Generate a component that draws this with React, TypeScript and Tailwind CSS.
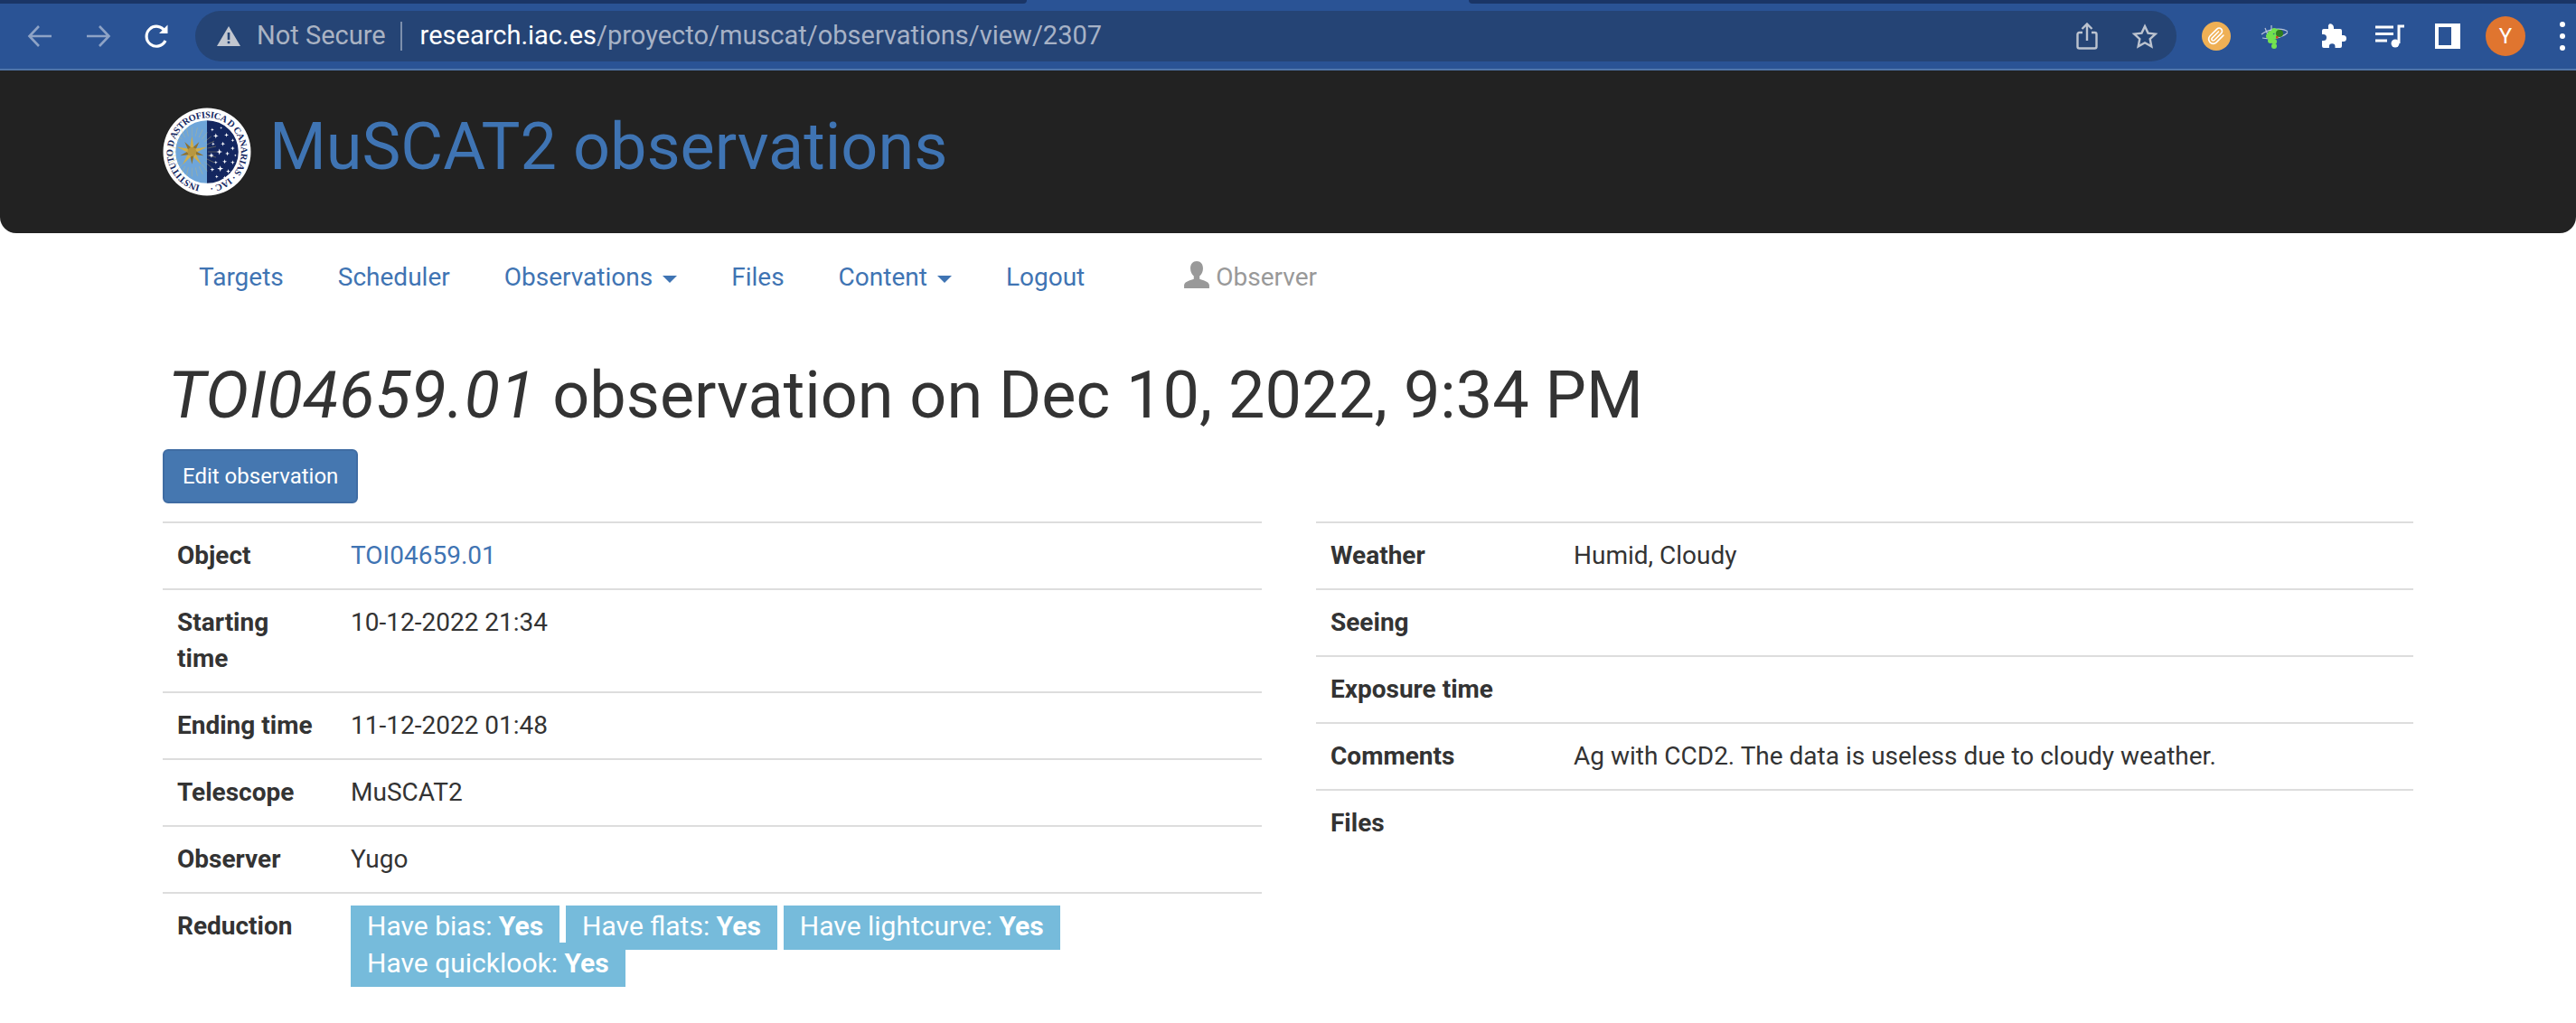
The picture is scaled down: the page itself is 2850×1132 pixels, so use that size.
import React from "react";

const font = { fontFamily: "Roboto, 'Liberation Sans', sans-serif" };

function Logo() {
  const points = Array.from({ length: 10 }, (_, i) => i * 36);
  const rays = Array.from({ length: 28 }, (_, i) => i * 12.857);
  const stars: [number, number, number][] = [
    [56, 25, 2], [66, 23, 1.5], [60, 32, 3], [72, 31, 2.5], [79, 37, 2], [57, 41, 2], [68, 41, 2.5], [79, 46, 2.5],
    [64, 50, 3.5], [55, 54, 3], [73, 52, 2.5], [82, 54, 1.5], [60, 62, 2], [70, 61, 2.5], [79, 62, 2.5],
    [56, 70, 2.5], [65, 69, 3.5], [74, 72, 2.5], [61, 78, 2], [70, 79, 2],
  ];
  return (
    <svg viewBox="0 0 100 100" className="w-[98px] h-[98px] shrink-0">
      <circle cx="50" cy="50" r="49.5" fill="#ffffff" />
      <path d="M50 14.500A35.500 35.500 0 0 0 50 85.500Z" fill="#6ea5d9" />
      <path d="M50 14.500A35.500 35.500 0 0 1 50 85.500Z" fill="#13265f" />
      {rays.map((r) => (
        <path key={r} d="M33 32 V22" stroke="#cdbb6a" strokeWidth="0.5" transform={`rotate(${r} 33 50)`} opacity="0.7" />
      ))}
      {points.map((r, i) => (
        <path key={r} d={`M30 50 L33 ${i % 2 ? 36 : 32} L36 50 Z`} fill={i % 2 ? "#8f7330" : "#cfae4c"} transform={`rotate(${r} 33 50)`} />
      ))}
      <circle cx="33" cy="50" r="5" fill="#b8973f" />
      {stars.map(([x, y, s], i) => (
        <path
          key={i}
          d={`M${x} ${y - s}L${x + s * 0.25} ${y - s * 0.25}L${x + s} ${y}L${x + s * 0.25} ${y + s * 0.25}L${x} ${y + s}L${x - s * 0.25} ${y + s * 0.25}L${x - s} ${y}L${x - s * 0.25} ${y - s * 0.25}Z`}
          fill="#ffffff"
        />
      ))}
      <defs>
        <path id="ring2" d="M50 88.500A38.500 38.500 0 1 1 50.010 88.500" />
      </defs>
      <text fontSize="10.500" fontWeight="700" fill="#13265f" fontFamily="'Liberation Serif', serif">
        <textPath href="#ring2" startOffset="8" textLength="230" lengthAdjust="spacing">INSTITUTO D ASTROFISICA D CANARIAS · IAC ·</textPath>
      </text>
    </svg>
  );
}

function Caret() {
  return <span className="inline-block ml-[11px] align-middle w-0 h-0 border-t-[8px] border-t-[#3f74b3] border-x-[8px] border-x-transparent" />;
}

function Chrome() {
  return (
    <div className="relative h-[78px] bg-[#2a5395] border-b-2 border-b-[#4f74a8] flex items-center pt-[4px]">
      <div className="absolute top-0 left-0 w-[1136px] h-[4px] bg-[#1a3566] rounded-br-[6px]" />
      <div className="absolute top-0 left-[1625px] right-0 h-[4px] bg-[#1a3566] rounded-bl-[6px]" />
      <div className="flex items-center shrink-0 w-[216px] pl-[30px]">
        <svg width="28" height="26" viewBox="0 0 28 26" fill="none" stroke="#8ea3c6" strokeWidth="2.6">
          <path d="M27 13H3M13 2 2.500 13 13 24" />
        </svg>
        <svg className="ml-[37px]" width="28" height="26" viewBox="0 0 28 26" fill="none" stroke="#8ea3c6" strokeWidth="2.6">
          <path d="M1 13H25M15 2 25.500 13 15 24" />
        </svg>
        <svg className="ml-[37px]" width="28" height="28" viewBox="0 0 28 28" fill="none" stroke="#ffffff" strokeWidth="3.2">
          <path d="M23 19a11 11 0 1 1-.5-10.500" />
          <path d="M25.500 1.500V11H16Z" fill="#ffffff" stroke="none" />
        </svg>
      </div>
      <div className="w-[2192px] h-[56px] rounded-full bg-[#254475] flex items-center pl-[24px] pr-[20px] text-[29px]" style={font}>
        <svg width="26" height="22" viewBox="0 0 26 22">
          <path d="M13 0 26 22H0Z" fill="#c2c7d0" />
          <rect x="11.700" y="7" width="2.600" height="8" fill="#254475" />
          <rect x="11.700" y="16.600" width="2.600" height="2.600" fill="#254475" />
        </svg>
        <span className="ml-[18px] text-[#aab3c3]">Not Secure</span>
        <span className="ml-[16px] w-[2px] h-[32px] bg-[#7d8fac]" />
        <span className="ml-[20px] text-white">research.iac.es</span>
        <span className="text-[#a7b2c6]">/proyecto/muscat/observations/view/2307</span>
        <span className="flex-1" />
        <svg width="24" height="30" viewBox="0 0 24 30" fill="none" stroke="#bcc3cf" strokeWidth="2.400" className="-ml-[2px]">
          <path d="M7 11H3.500A2 2 0 0 0 1.500 13V26.500A2 2 0 0 0 3.500 28.500H20.500A2 2 0 0 0 22.500 26.500V13A2 2 0 0 0 20.500 11H17" />
          <path d="M12 20V2M6.500 7 12 1.500 17.500 7" />
        </svg>
        <svg className="ml-[37px]" width="30" height="28" viewBox="0 0 24 23" fill="none" stroke="#bcc3cf" strokeWidth="2">
          <path d="M12 2.500 14.900 8.700 21.600 9.500 16.700 14.100 18 20.800 12 17.500 6 20.800 7.300 14.100 2.400 9.500 9.100 8.700Z" />
        </svg>
      </div>
      <div className="flex items-center pl-[28px]">
        <div className="w-[32px] h-[32px] rounded-full bg-[#efb055] flex items-center justify-center">
          <svg width="20" height="20" viewBox="0 0 24 24" fill="none" stroke="#ffffff" strokeWidth="2" strokeLinecap="round">
            <path d="M21.400 11 12.200 20.200a6 6 0 0 1-8.500-8.500l9.200-9.200a4 4 0 0 1 5.700 5.700l-9.200 9.200a2 2 0 0 1-2.900-2.900l8.500-8.500" />
          </svg>
        </div>
        <svg className="ml-[33px]" width="32" height="32" viewBox="0 0 32 32">
          <path d="M1 14C8 8 24 6 30 11M5 7 9 17M12 4 12 14M2 18C10 20 24 18 30 12" fill="none" stroke="#b9c5da" strokeWidth="1.200" />
          {[[11, 13], [15, 10], [19, 11], [9, 16], [13, 17], [17, 16], [11, 21], [15, 22], [15, 27]].map(([x, y], i) => (
            <circle key={i} cx={x} cy={y} r="3" fill="#73e24f" />
          ))}
          <circle cx="21" cy="13" r="4" fill="#2f7d1f" />
          <rect x="17" y="16" width="2.500" height="2.500" fill="#d9382b" />
        </svg>
        <svg className="ml-[33px]" width="30" height="30" viewBox="0 0 30 30" fill="#ffffff">
          <path d="M11 1.500a4 4 0 0 1 5 4V7h7a2 2 0 0 1 2 2v5h1.500a3.500 3.500 0 0 1 0 7H25v5a2 2 0 0 1-2 2h-5.500v-1.500a3.300 3.300 0 0 0-6.600 0V28H5a2 2 0 0 1-2-2v-6h1.500a3.500 3.500 0 0 0 0-7H3V9a2 2 0 0 1 2-2h5V5.500a4 4 0 0 1 1-4Z" />
        </svg>
        <svg className="ml-[31px]" width="34" height="26" viewBox="0 0 34 26" fill="none" stroke="#ffffff" strokeWidth="3">
          <path d="M1 3H21M1 10.500H21M1 18H14" />
          <path d="M27 21V2H33" />
          <circle cx="23" cy="21" r="4.500" fill="#ffffff" stroke="none" />
        </svg>
        <div className="ml-[33px] w-[28px] h-[28px] bg-white flex pl-[4px] py-[4px] pr-[10px]">
          <div className="flex-1 bg-[#2a5395]" />
        </div>
        <div className="ml-[28px] w-[44px] h-[44px] rounded-full bg-[#e0752f] text-white flex items-center justify-center text-[24px]" style={font}>Y</div>
        <div className="ml-[38px] flex flex-col gap-[7px]">
          <span className="w-[6px] h-[6px] rounded-full bg-white" />
          <span className="w-[6px] h-[6px] rounded-full bg-white" />
          <span className="w-[6px] h-[6px] rounded-full bg-white" />
        </div>
      </div>
    </div>
  );
}

function Row({ label, children, h }: { label: React.ReactNode; children?: React.ReactNode; h: string }) {
  return (
    <div className="flex border-t-2 border-t-[#dddddd] py-[16px] leading-[40px]">
      <div className={`${h} shrink-0 pl-[16px] font-bold`}>{label}</div>
      <div className="flex-1">{children}</div>
    </div>
  );
}

function Label({ name }: { name: string }) {
  return (
    <span className="bg-[#76bbdb] text-white px-[18px] pt-[5px] pb-[9px] text-[30px]">
      {name}: <b>Yes</b>
    </span>
  );
}

const navItem = "px-[30px] text-[#3f74b3]";

export default function App() {
  return (
    <div className="w-[2850px] h-[1132px] overflow-hidden bg-white text-[28px] text-[#333333]" style={font}>
      <Chrome />
      <header className="h-[180px] bg-[#222222] rounded-b-[18px] flex items-center pl-[180px]">
        <Logo />
        <h1 className="ml-[20px] text-[72px] leading-[80px] font-normal text-[#3f74b3] -mt-[10px]">MuSCAT2 observations</h1>
      </header>
      <nav className="flex items-center h-[98px] pl-[190px]">
        <a className={navItem}>Targets</a>
        <a className={navItem}>Scheduler</a>
        <a className={navItem}>Observations<Caret /></a>
        <a className={navItem}>Files</a>
        <a className={navItem}>Content<Caret /></a>
        <a className={navItem}>Logout</a>
        <span className="ml-[79px] flex items-center text-[#999999]">
          <svg width="30" height="30" viewBox="0 0 28 28" fill="#999999" className="-mt-[6px]">
            <path d="M14 0c4 0 6.500 3 6.500 7.500 0 3.500-1.500 6.500-3.500 8v3c3 1.500 9 2 10 6V28H1v-3.500c1-4 7-4.500 10-6v-3c-2-1.500-3.500-4.500-3.500-8C7.500 3 10 0 14 0Z" />
          </svg>
          <span className="ml-[6px]">Observer</span>
        </span>
      </nav>
      <main className="pl-[180px] w-[2670px]">
        <h2 className="pl-[6px] text-[72px] leading-[80px] font-normal mt-[42px]">
          <i className="tracking-[0.6px]">TOI04659.01</i> observation on Dec 10, 2022, 9:34 PM
        </h2>
        <button className="block mt-[19px] h-[60px] px-[20px] bg-[#4577b0] border-2 border-[#3f6ca3] rounded-[6px] text-white text-[24px]">
          Edit observation
        </button>
        <div className="mt-[20px] flex gap-[60px]">
          <div className="w-[1216px]">
            <Row h="w-[208px]" label="Object"><a className="text-[#3f74b3]">TOI04659.01</a></Row>
            <Row h="w-[208px]" label={<>Starting<br />time</>}>10-12-2022 21:34</Row>
            <Row h="w-[208px]" label="Ending time">11-12-2022 01:48</Row>
            <Row h="w-[208px]" label="Telescope">MuSCAT2</Row>
            <Row h="w-[208px]" label="Observer">Yugo</Row>
            <Row h="w-[208px]" label="Reduction">
              <div className="w-[800px]">
                <Label name="Have bias" /> <Label name="Have flats" /> <Label name="Have lightcurve" /> <Label name="Have quicklook" />
              </div>
            </Row>
          </div>
          <div className="w-[1214px]">
            <Row h="w-[285px]" label="Weather">Humid, Cloudy</Row>
            <Row h="w-[285px]" label="Seeing"><span>&nbsp;</span></Row>
            <Row h="w-[285px]" label="Exposure time"><span>&nbsp;</span></Row>
            <Row h="w-[285px]" label="Comments">Ag with CCD2. The data is useless due to cloudy weather.</Row>
            <Row h="w-[285px]" label="Files"><span>&nbsp;</span></Row>
          </div>
        </div>
      </main>
    </div>
  );
}
